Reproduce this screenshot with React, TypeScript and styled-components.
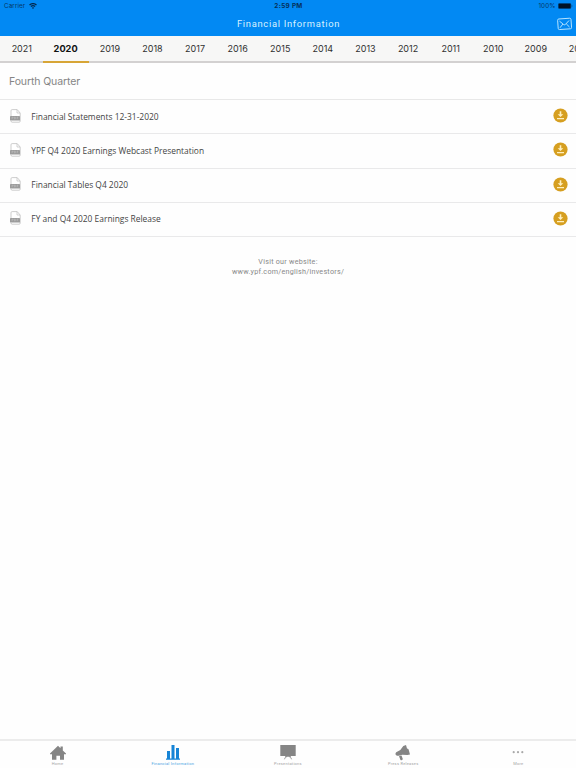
import React from "react";
import styled, { createGlobalStyle } from "styled-components";

const GlobalStyle = createGlobalStyle`
  * { box-sizing: border-box; }
  html, body, #root { margin: 0; height: 100%; }
  body { background: #fff; overflow: hidden; }
`;

const Screen = styled.div`
  display: flex;
  flex-direction: column;
  width: 100%;
  height: 768px;
  overflow: hidden;
  background: #fefefe;
  font-family: Inter, sans-serif;
`;

const Header = styled.header`
  height: 36px;
  flex: none;
  background: #0289f3;
`;

const StatusBar = styled.div`
  display: grid;
  grid-template-columns: 1fr auto 1fr;
  align-items: center;
  height: 12px;
  padding: 0 3px 0 4px;
  font-size: 6.3px;
  letter-spacing: 0.1px;
  line-height: 12px;
  color: #063866;
`;

const StatusSide = styled.div<{ $end?: boolean }>`
  display: flex;
  align-items: center;
  justify-content: ${(p) => (p.$end ? "flex-end" : "flex-start")};
  gap: ${(p) => (p.$end ? 2.5 : 3.3)}px;
`;

const Clock = styled.span`
  font-weight: 700;
  font-size: 6.4px;
  letter-spacing: 0.33px;
  color: #05305a;
`;

const TitleBar = styled.div`
  display: grid;
  grid-template-columns: 1fr auto 1fr;
  align-items: center;
  height: 24px;
  padding-right: 3px;
`;

const Title = styled.h1`
  grid-column: 2;
  margin: 0;
  padding-left: 4px;
  font: 400 9.4px/24px Roboto, sans-serif;
  letter-spacing: 0.7px;
  color: #d9f2ff;
`;

const MailButton = styled.button`
  display: flex;
  justify-self: end;
  padding: 0;
  border: 0;
  background: none;
`;

const YearTabs = styled.nav`
  display: flex;
  flex: none;
  height: 27px;
  background: #f7f7f6;
  overflow: hidden;
  box-shadow: inset 0 -2px #d3d1d1;
`;

const YearTab = styled.a<{ $active?: boolean }>`
  flex: none;
  width: ${(p) => (p.$active ? 46 : 42.6)}px;
  height: 27px;
  text-align: center;
  font-size: ${(p) => (p.$active ? 9.2 : 9)}px;
  line-height: 25px;
  font-weight: ${(p) => (p.$active ? 700 : 400)};
  color: ${(p) => (p.$active ? "#111" : "#303030")};
  border-bottom: 2px solid ${(p) => (p.$active ? "#d7a536" : "transparent")};

  &:first-child {
    padding-left: 1px;
  }

  &:last-child {
    padding-left: 3px;
  }
`;

const Content = styled.main`
  flex: 1;
`;

const SectionTitle = styled.h2`
  height: 37px;
  margin: 0;
  padding-left: 9px;
  font-size: 10.5px;
  font-weight: 400;
  line-height: 37px;
  letter-spacing: -0.12px;
  color: #858585;
  border-bottom: 1px solid #e8e8e8;
`;

const DocumentRow = styled.div`
  display: flex;
  align-items: center;
  height: 34.25px;
  padding: 0 8.5px 0 10px;
  border-bottom: 1px solid #e9e9ea;

  svg {
    margin-bottom: 2px;
  }
`;

const DocumentName = styled.span`
  flex: 1;
  padding-left: 10.3px;
  font: 400 8.42px/34px "Open Sans", sans-serif;
  color: #444;
`;

const Website = styled.p`
  margin: 20px 0 0;
  text-align: center;
  font: 400 7.2px/10px Roboto, sans-serif;
  letter-spacing: 0.25px;
  color: #888;
`;

const TabBar = styled.nav`
  display: grid;
  grid-template-columns: repeat(5, 1fr);
  flex: none;
  height: 29px;
  border-top: 2px solid #ececec;
`;

const TabItem = styled.a<{ $active?: boolean }>`
  display: flex;
  flex-direction: column;
  align-items: center;
  padding-top: 4px;
  color: ${(p) => (p.$active ? "#1684d6" : "#858585")};
`;

const TabLabel = styled.span<{ $active?: boolean }>`
  font: 400 4px/5px Roboto, sans-serif;
  letter-spacing: 0.24px;
  color: ${(p) => (p.$active ? "#4ba3e3" : "#a5a5a5")};
`;

const Wifi = () => (
  <svg width="8" height="6" viewBox="0 0 16 12" fill="#04294e">
    <path d="M8 12 5.8 9.3a3.6 3.6 0 0 1 4.4 0ZM4.6 8 3 6.2a8 8 0 0 1 10 0L11.4 8a5.7 5.7 0 0 0-6.8 0ZM1.9 4.9.2 3a12.5 12.5 0 0 1 15.6 0l-1.7 1.9a10 10 0 0 0-12.2 0Z" />
  </svg>
);

const Battery = () => (
  <svg width="15" height="6" viewBox="0 0 15 6">
    <rect x="0.4" y="0.4" width="12.4" height="5.2" rx="1" fill="#001225" stroke="#02386a" strokeWidth=".5" />
    <path d="M13.6 2v2q.9-.4.9-1t-.9-1" fill="#04498a" />
  </svg>
);

const Mail = () => (
  <svg width="17" height="14" viewBox="0 0 17 14" fill="none" stroke="#c5eaff" strokeWidth=".9">
    <g transform="rotate(-4 8.5 7)">
      <rect x="1.9" y="1.6" width="13.4" height="10.6" rx="1.3" />
      <path d="m3.700 3.800 3.800 3.600q1 .8 2 0l3.800-3.600M3.800 10.400l3-3.400M13.300 10.400l-3-3.400" />
    </g>
  </svg>
);

const PdfFile = () => (
  <svg width="11" height="14" viewBox="0 0 11 14">
    <path d="M1 7V1.8Q1 .6 2.2.6h5L10.2 4v8q0 1.2-1 1.2h-7Q1 13.200 1 12" fill="#fff" stroke="#c0c0c0" strokeWidth=".8" />
    <path d="M7 .8V4h3" fill="none" stroke="#c0c0c0" strokeWidth=".7" />
    <rect y="6.900" width="10" height="4.600" rx=".6" fill="#9c9c9c" />
    <path d="M2 10V8h.8q.6.500 0 1H2m2.400 1V8q1.800.1 1.200 1.500-.4.500-1.200.5m2.700 0V8h1.300M7.100 9h1" fill="none" stroke="#c6c6c6" strokeWidth=".45" />
  </svg>
);

const Download = () => (
  <svg width="15" height="15" viewBox="0 0 15 15">
    <circle cx="7.500" cy="7.500" r="7.100" fill="#d69f20" />
    <path d="M6.700 3.200h1.600v3h2L7.500 9 4.700 6.200h2zM4 10h7v1.200H4z" fill="#fff0c0" />
  </svg>
);

const HomeIcon = () => (
  <svg width="18" height="16" viewBox="0 0 18 16" fill="currentColor">
    <path d="M1 8.600 9 .8l2.500 2.400V1.500h2.300v4L17 8.600v.7h-2v5.400h-4v-4H7.400v4H3V9.300H1z" />
  </svg>
);

const ChartIcon = () => (
  <svg width="18" height="16" viewBox="0 0 18 16" fill="currentColor">
    <path d="M3 6h3v7.500H3zM7.500-.5h3v14h-3zM12 3h3v10.500h-3zM2 13.500h14v1.300H2z" />
  </svg>
);

const PresentationIcon = () => (
  <svg width="18" height="16" viewBox="0 0 18 16" fill="currentColor">
    <path d="M1.300 0h15.400v11H1.300zM6 11.300h6v.8H6z" />
    <path d="M8 11.500q-2 .4-2.600 2.800M10 11.500q2 .4 2.600 2.800" fill="none" stroke="currentColor" strokeWidth=".8" />
  </svg>
);

const MegaphoneIcon = () => (
  <svg width="18" height="16" viewBox="0 0 18 16" fill="currentColor">
    <path d="M2.200 7.300 6.300 5l3-4L12 .1l1 3.300q1.800.2 1.900 2l1.100 4-2.700.5-5-.2-3.400 1.100Q1.500 11 1.500 8.800q0-1 .7-1.500M5 11.300l2.500-.8 1.300 3.500q-.7 1.700-2.300 1z" />
  </svg>
);

const MoreIcon = () => (
  <svg width="18" height="16" viewBox="0 0 18 16" fill="#a9a9a9">
    <circle cx="4.700" cy="7.200" r="1.100" />
    <circle cx="9" cy="7.200" r="1.100" />
    <circle cx="13.300" cy="7.200" r="1.100" />
  </svg>
);

const years = [2021, 2020, 2019, 2018, 2017, 2016, 2015, 2014, 2013, 2012, 2011, 2010, 2009, 2008];

const documents = [
  "Financial Statements 12-31-2020",
  "YPF Q4 2020 Earnings Webcast Presentation",
  "Financial Tables Q4 2020",
  "FY and Q4 2020 Earnings Release",
];

const tabs = [
  { label: "Home", Icon: HomeIcon },
  { label: "Financial Information", Icon: ChartIcon, active: true },
  { label: "Presentations", Icon: PresentationIcon },
  { label: "Press Releases", Icon: MegaphoneIcon },
  { label: "More", Icon: MoreIcon },
];

export default function App() {
  return (
    <Screen>
      <GlobalStyle />
      <Header>
        <StatusBar>
          <StatusSide>
            Carrier
            <Wifi />
          </StatusSide>
          <Clock>2:59 PM</Clock>
          <StatusSide $end>
            100%
            <Battery />
          </StatusSide>
        </StatusBar>
        <TitleBar>
          <Title>Financial Information</Title>
          <MailButton aria-label="Contact">
            <Mail />
          </MailButton>
        </TitleBar>
      </Header>
      <YearTabs>
        {years.map((year) => (
          <YearTab key={year} $active={year === 2020}>
            {year}
          </YearTab>
        ))}
      </YearTabs>
      <Content>
        <SectionTitle>Fourth Quarter</SectionTitle>
        {documents.map((name) => (
          <DocumentRow key={name}>
            <PdfFile />
            <DocumentName>{name}</DocumentName>
            <Download />
          </DocumentRow>
        ))}
        <Website>
          Visit our website:
          <br />
          www.ypf.com/english/investors/
        </Website>
      </Content>
      <TabBar>
        {tabs.map(({ label, Icon, active }) => (
          <TabItem key={label} $active={active}>
            <Icon />
            <TabLabel $active={active}>{label}</TabLabel>
          </TabItem>
        ))}
      </TabBar>
    </Screen>
  );
}
